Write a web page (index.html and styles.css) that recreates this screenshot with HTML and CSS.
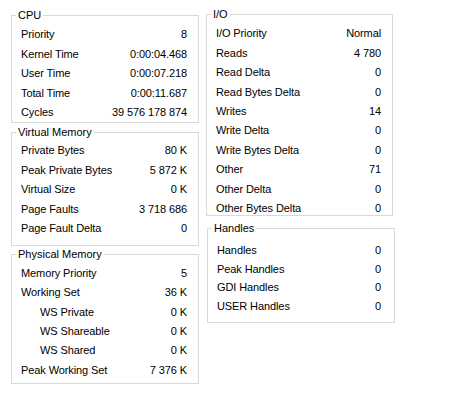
FILE: index.html
```html
<!DOCTYPE html>
<html>
<head>
<meta charset="utf-8">
<link rel="stylesheet" href="styles.css">
</head>
<body>
<div class="page">
  <div class="col col-left">
    <section class="group g-cpu">
      <div class="title">CPU</div>
      <div class="rows">
        <div class="row"><span>Priority</span><span>8</span></div>
        <div class="row"><span>Kernel Time</span><span>0:00:04.468</span></div>
        <div class="row"><span>User Time</span><span>0:00:07.218</span></div>
        <div class="row"><span>Total Time</span><span>0:00:11.687</span></div>
        <div class="row"><span>Cycles</span><span>39 576 178 874</span></div>
      </div>
    </section>
    <section class="group g-vm">
      <div class="title">Virtual Memory</div>
      <div class="rows">
        <div class="row"><span>Private Bytes</span><span>80 K</span></div>
        <div class="row"><span>Peak Private Bytes</span><span>5 872 K</span></div>
        <div class="row"><span>Virtual Size</span><span>0 K</span></div>
        <div class="row"><span>Page Faults</span><span>3 718 686</span></div>
        <div class="row"><span>Page Fault Delta</span><span>0</span></div>
      </div>
    </section>
    <section class="group g-pm">
      <div class="title">Physical Memory</div>
      <div class="rows">
        <div class="row"><span>Memory Priority</span><span>5</span></div>
        <div class="row"><span>Working Set</span><span>36 K</span></div>
        <div class="row sub"><span>WS Private</span><span>0 K</span></div>
        <div class="row sub"><span>WS Shareable</span><span>0 K</span></div>
        <div class="row sub"><span>WS Shared</span><span>0 K</span></div>
        <div class="row"><span>Peak Working Set</span><span>7 376 K</span></div>
      </div>
    </section>
  </div>
  <div class="col col-right">
    <section class="group g-io">
      <div class="title">I/O</div>
      <div class="rows">
        <div class="row"><span>I/O Priority</span><span>Normal</span></div>
        <div class="row"><span>Reads</span><span>4 780</span></div>
        <div class="row"><span>Read Delta</span><span>0</span></div>
        <div class="row"><span>Read Bytes Delta</span><span>0</span></div>
        <div class="row"><span>Writes</span><span>14</span></div>
        <div class="row"><span>Write Delta</span><span>0</span></div>
        <div class="row"><span>Write Bytes Delta</span><span>0</span></div>
        <div class="row"><span>Other</span><span>71</span></div>
        <div class="row"><span>Other Delta</span><span>0</span></div>
        <div class="row"><span>Other Bytes Delta</span><span>0</span></div>
      </div>
    </section>
    <section class="group g-h">
      <div class="title">Handles</div>
      <div class="rows">
        <div class="row"><span>Handles</span><span>0</span></div>
        <div class="row"><span>Peak Handles</span><span>0</span></div>
        <div class="row"><span>GDI Handles</span><span>0</span></div>
        <div class="row"><span>USER Handles</span><span>0</span></div>
      </div>
    </section>
  </div>
</div>
</body>
</html>
```

FILE: styles.css
```css
html, body {
  margin: 0;
  padding: 0;
  background: #ffffff;
}

body {
  font-family: "Liberation Sans", Arial, sans-serif;
  font-size: 11px;
  color: #000000;
  width: 475px;
  height: 411px;
  overflow: hidden;
}

.page {
  display: flex;
  align-items: flex-start;
  gap: 7px;
  padding-left: 11px;
}

.col {
  display: flex;
  flex-direction: column;
}

.col-left {
  width: 188px;
  padding-top: 15px;
}

.col-right {
  width: 187px;
  padding-top: 14px;
}

.group {
  box-sizing: border-box;
  border: 1px solid #d9d9d9;
  padding: 0 11px 0 9px;
}

.title {
  display: table;
  margin: -7px 0 0 -5px;
  padding: 0 2px;
  line-height: 13px;
  background: #ffffff;
}

.row {
  display: flex;
  justify-content: space-between;
  align-items: center;
  height: 19.4px;
  line-height: 13px;
  white-space: nowrap;
  letter-spacing: -0.1px;
}

.row.sub span:first-child {
  padding-left: 19px;
}

.g-cpu { height: 108px; }
.g-cpu .rows { margin-top: 3.3px; }

.g-vm { height: 114px; margin-top: 9px; }
.g-vm .rows { margin-top: 2.3px; }

.g-pm { height: 130px; margin-top: 8px; }
.g-pm .rows { margin-top: 2.6px; }

.g-io { height: 202px; }
.g-io .rows { margin-top: 3.3px; }

.g-h {
  height: 95px;
  margin-top: 12px;
  margin-left: 1px;
  width: 188px;
  padding-right: 13px;
}
.g-h .rows { margin-top: 5.9px; }
.g-h .row { height: 18.8px; }
```
